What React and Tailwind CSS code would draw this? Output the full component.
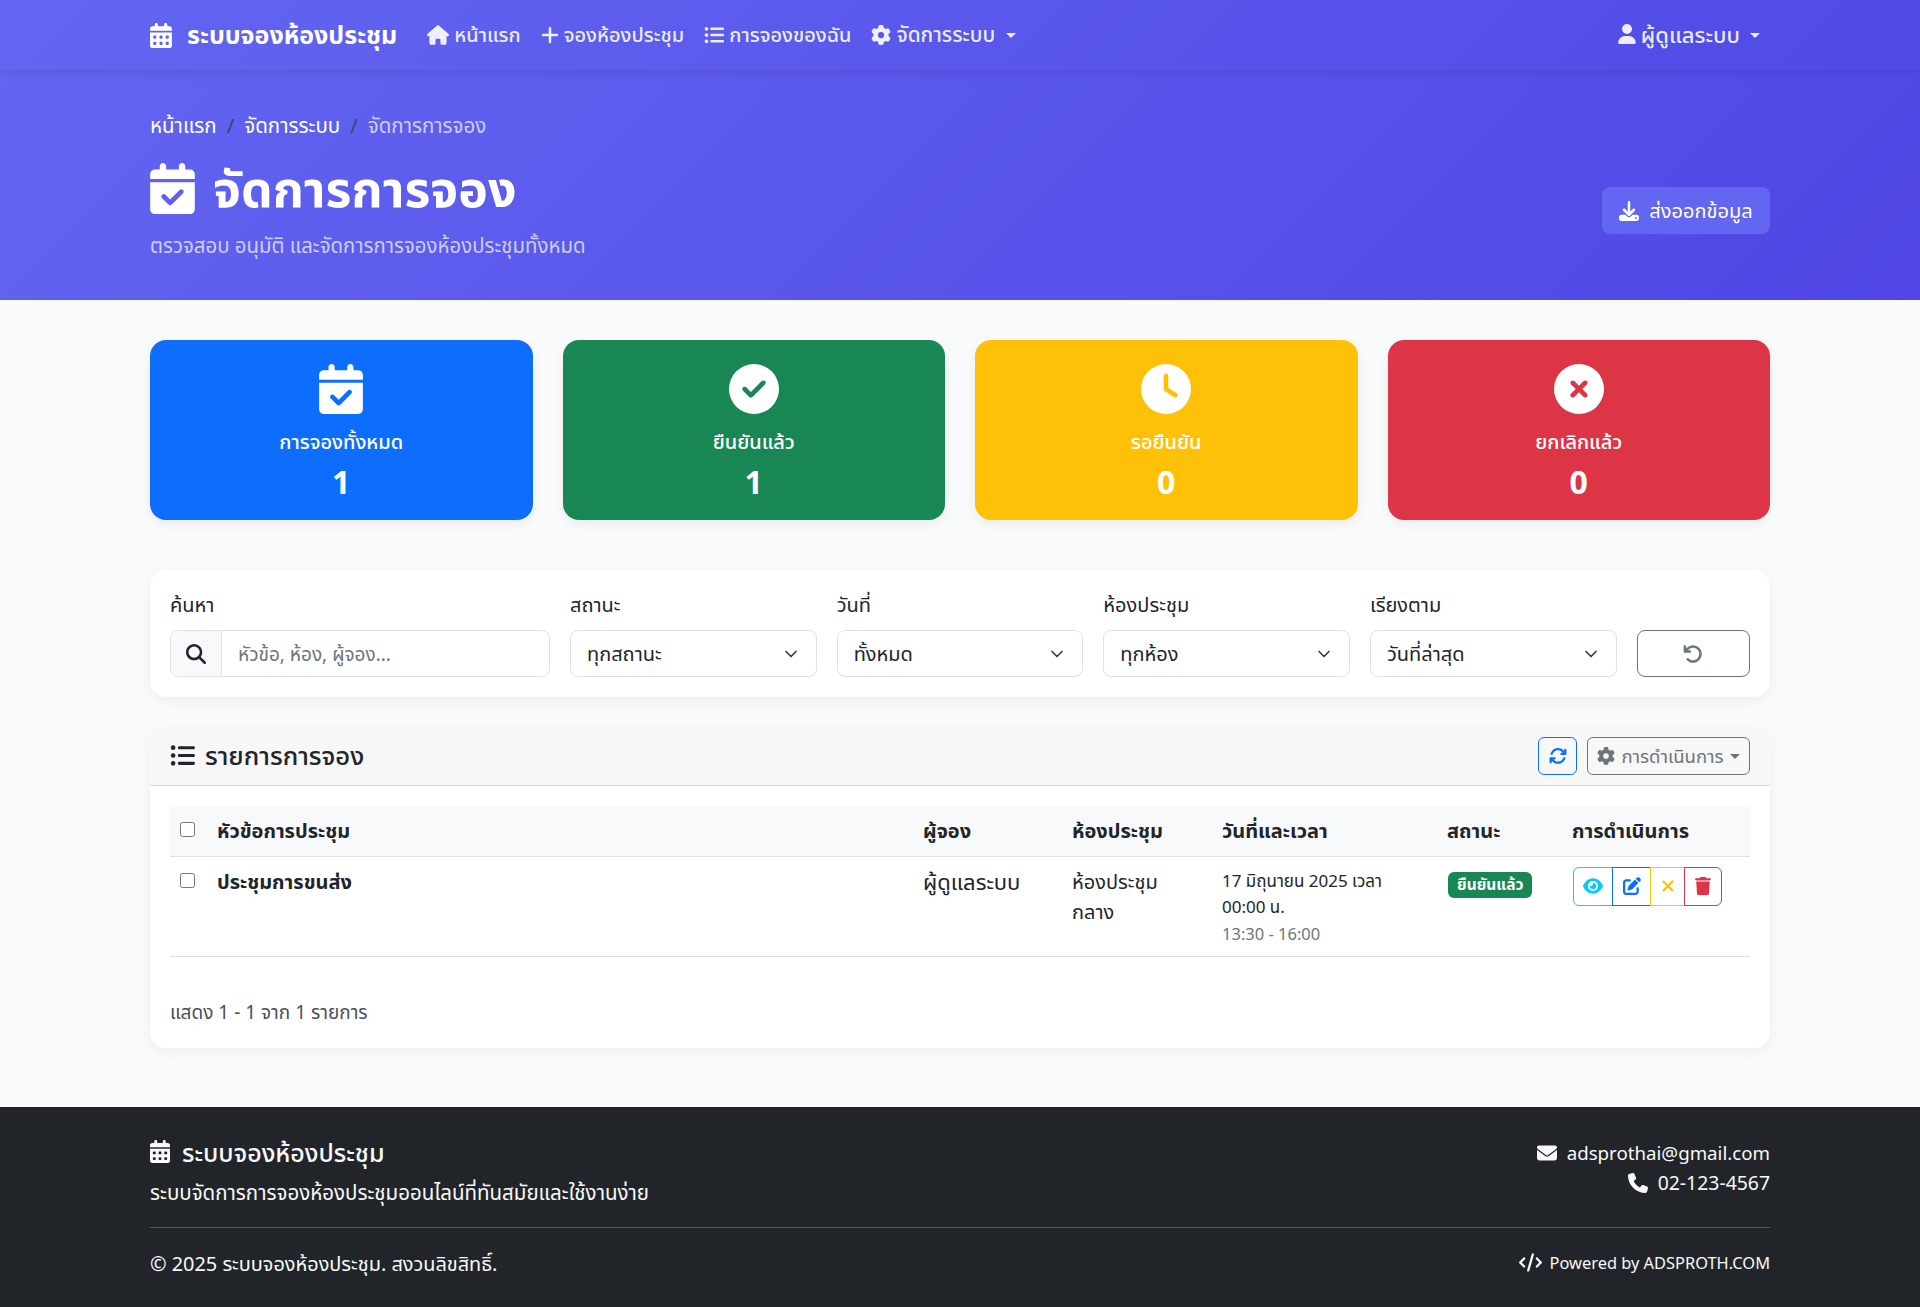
import React from 'react';
import {
  FaCalendarDays, FaHouse, FaPlus, FaListUl, FaGear, FaUser, FaCalendarCheck, FaDownload,
  FaCircleCheck, FaClock, FaCircleXmark, FaMagnifyingGlass, FaArrowRotateLeft, FaArrowsRotate,
  FaEye, FaPenToSquare, FaXmark, FaTrash, FaEnvelope, FaPhone, FaCode,
} from 'react-icons/fa6';
import { ChevronDown } from 'lucide-react';

const STATS = [
  { label: 'การจองทั้งหมด', value: '1', icon: FaCalendarCheck, bg: 'bg-[#0d6efd]' },
  { label: 'ยืนยันแล้ว', value: '1', icon: FaCircleCheck, bg: 'bg-[#198754]' },
  { label: 'รอยืนยัน', value: '0', icon: FaClock, bg: 'bg-[#ffc107]' },
  { label: 'ยกเลิกแล้ว', value: '0', icon: FaCircleXmark, bg: 'bg-[#dc3545]' },
];

const FILTERS = [
  { label: 'สถานะ', value: 'ทุกสถานะ' },
  { label: 'วันที่', value: 'ทั้งหมด' },
  { label: 'ห้องประชุม', value: 'ทุกห้อง' },
  { label: 'เรียงตาม', value: 'วันที่ล่าสุด' },
];

function Caret({ className }) {
  return <span className={`inline-block w-0 h-0 border-x-[5px] border-x-transparent border-t-[5px] ${className}`} />;
}

function NavLink({ icon: Icon, iconClass, textClass = 'text-[20px]', children }) {
  return (
    <a className={`flex items-center gap-[5px] text-[#ffffffe6] font-medium ${textClass}`}>
      <Icon className={iconClass} />
      <span>{children}</span>
    </a>
  );
}

function Navbar() {
  return (
    <nav className="h-[70px] shadow-[0_2px_10px_rgba(0,0,0,0.1)] relative">
      <div className="w-[1620px] mx-auto h-full flex items-center">
        <a className="flex items-center gap-[15px] text-white text-[25px] font-bold mr-[30px]">
          <FaCalendarDays className="w-[22px] h-[25px]" />
          <span>ระบบจองห้องประชุม</span>
        </a>
        <div className="flex items-center gap-5">
          <NavLink icon={FaHouse} iconClass="w-[22px] h-5">หน้าแรก</NavLink>
          <NavLink icon={FaPlus} iconClass="w-[18px] h-5">จองห้องประชุม</NavLink>
          <NavLink icon={FaListUl} iconClass="w-5 h-5">การจองของฉัน</NavLink>
          <div className="flex items-center gap-[11px]">
            <NavLink icon={FaGear} iconClass="w-5 h-5" textClass="text-[20.8px]">จัดการระบบ</NavLink>
            <Caret className="border-t-[#ffffffe6]" />
          </div>
        </div>
        <div className="ml-auto mr-[10px] flex items-center gap-[10px]">
          <NavLink icon={FaUser} iconClass="w-[18px] h-5" textClass="text-[22px] leading-[26px] mb-[2px]">ผู้ดูแลระบบ</NavLink>
          <Caret className="border-t-[#ffffffe6]" />
        </div>
      </div>
    </nav>
  );
}

function Hero() {
  return (
    <div className="w-[1620px] mx-auto h-[230px] pt-[42px]">
      <div className="flex items-center gap-[10px] text-[20.5px] leading-[26px]">
        <span className="text-white">หน้าแรก</span>
        <span className="text-[#3d4270]">/</span>
        <span className="text-white">จัดการระบบ</span>
        <span className="text-[#3d4270]">/</span>
        <span className="text-[#ffffffb3]">จัดการการจอง</span>
      </div>
      <div className="flex items-center justify-between mt-4">
        <div>
          <h1 className="flex items-center gap-[18px] text-white text-[50px] font-bold leading-[68px]">
            <FaCalendarCheck className="w-[45px] h-[51px]" />
            จัดการการจอง
          </h1>
          <p className="text-[#ffffffb3] text-[20.4px] leading-[29px] mt-[9px]">ตรวจสอบ อนุมัติ และจัดการการจองห้องประชุมทั้งหมด</p>
        </div>
        <button className="w-[168px] h-[47px] mt-[7px] rounded-lg bg-[#6366f1] text-white text-[20px] flex items-center justify-center gap-[10px]">
          <FaDownload className="w-5 h-5" />
          ส่งออกข้อมูล
        </button>
      </div>
    </div>
  );
}

function StatCard({ stat }) {
  const Icon = stat.icon;
  return (
    <div className={`${stat.bg} h-[180px] rounded-2xl pt-6 flex flex-col items-center text-white shadow-[0_4px_12px_rgba(0,0,0,0.06)]`}>
      <Icon className="w-[50px] h-[50px]" />
      <div className="text-[20px] font-medium leading-[29px] mt-[13px]">{stat.label}</div>
      <div className="text-[32px] font-bold leading-[38px] mt-[7px]">{stat.value}</div>
    </div>
  );
}

function Filters() {
  return (
    <div className="bg-white rounded-2xl p-5 mt-[50px] shadow-[0_4px_14px_rgba(0,0,0,0.05)] grid grid-cols-12 gap-5 items-end">
      <div className="col-span-3">
        <label className="block text-[20px] leading-[30px] text-[#212529] mb-[10px]">ค้นหา</label>
        <div className="flex h-[47px] border border-[#dee2e6] rounded-lg overflow-hidden">
          <span className="w-[51px] bg-[#f8f9fa] border-r border-[#dee2e6] flex items-center justify-center text-[#212529]">
            <FaMagnifyingGlass className="w-5 h-5" />
          </span>
          <input placeholder="หัวข้อ, ห้อง, ผู้จอง..." className="flex-1 min-w-0 px-4 pt-px text-[19px] outline-none placeholder:text-[#6c757d]" />
        </div>
      </div>
      {FILTERS.map(f => (
        <div key={f.label} className="col-span-2">
          <label className="block text-[20px] leading-[30px] text-[#212529] mb-[10px]">{f.label}</label>
          <div className="h-[47px] border border-[#dee2e6] rounded-lg pl-4 pr-[15px] flex items-center justify-between text-[20px] text-[#212529]">
            <span>{f.value}</span>
            <ChevronDown className="w-5 h-5 text-[#343a40]" strokeWidth={2} />
          </div>
        </div>
      ))}
      <button className="col-span-1 h-[47px] border border-[#6c757d] rounded-lg flex items-center justify-center text-[#6c757d]">
        <FaArrowRotateLeft className="w-5 h-5" />
      </button>
    </div>
  );
}

function BookingTable() {
  return (
    <table className="w-full table-fixed text-[20px] text-[#212529]">
      <colgroup>
        <col className="w-[39px]" />
        <col className="w-[706px]" />
        <col className="w-[149px]" />
        <col className="w-[150px]" />
        <col className="w-[225px]" />
        <col className="w-[125px]" />
        <col className="w-[186px]" />
      </colgroup>
      <thead>
        <tr className="h-[50px] bg-[#f8f9fa] border-b border-[#dee2e6] text-left">
          <th className="pl-2 align-middle"><input type="checkbox" className="w-[15px] h-[15px] block ml-[2px] mb-[2px]" /></th>
          <th className="px-2 font-bold">หัวข้อการประชุม</th>
          <th className="px-2 font-bold">ผู้จอง</th>
          <th className="px-2 font-bold">ห้องประชุม</th>
          <th className="px-2 font-bold">วันที่และเวลา</th>
          <th className="px-2 font-bold">สถานะ</th>
          <th className="px-2 font-bold">การดำเนินการ</th>
        </tr>
      </thead>
      <tbody>
        <tr className="h-[100px] border-b border-[#dee2e6] align-top">
          <td className="pl-2 pt-4"><input type="checkbox" className="w-[15px] h-[15px] block ml-[2px]" /></td>
          <td className="px-2 pt-[10px] font-bold leading-[30px]">ประชุมการขนส่ง</td>
          <td className="px-2 pt-[9px] text-[22px] leading-[30px]">ผู้ดูแลระบบ</td>
          <td className="px-2 pt-[10px] leading-[30px]">ห้องประชุม<br />กลาง</td>
          <td className="px-2 pt-[11px] text-[17px] leading-[26px]">
            17 มิถุนายน 2025 เวลา<br />00:00 น.
            <div className="text-[16.5px] leading-[27px] text-[#6c757d]">13:30 - 16:00</div>
          </td>
          <td className="px-2 pt-[15px]">
            <span className="flex items-center w-fit h-[26px] px-[9px] ml-px rounded-md bg-[#198754] text-white text-[15.5px] font-bold">ยืนยันแล้ว</span>
          </td>
          <td className="pl-2 pt-[10px]">
            <div className="flex h-[39px] w-[149px] ml-px">
              <button className="w-[40px] border border-[#0dcaf0] rounded-l-md flex items-center justify-center text-[#0dcaf0]"><FaEye className="w-5 h-5" /></button>
              <button className="w-[39px] -ml-px border border-[#0d6efd] flex items-center justify-center text-[#0d6efd]"><FaPenToSquare className="w-[18px] h-[18px]" /></button>
              <button className="w-[35px] -ml-px border border-[#ffc107] flex items-center justify-center text-[#ffc107]"><FaXmark className="w-[18px] h-[18px]" /></button>
              <button className="w-[38px] -ml-px border border-[#dc3545] rounded-r-md flex items-center justify-center text-[#dc3545]"><FaTrash className="w-4 h-[18px]" /></button>
            </div>
          </td>
        </tr>
      </tbody>
    </table>
  );
}

function BookingList() {
  return (
    <div className="bg-white rounded-2xl mt-[30px] shadow-[0_4px_14px_rgba(0,0,0,0.05)] overflow-hidden">
      <div className="h-[59px] bg-[#f7f7f7] border-b border-[#d3d4d5] px-5 flex items-center justify-between">
        <h2 className="flex items-center gap-[10px] text-[25.6px] font-medium text-[#212529]">
          <FaListUl className="w-[25px] h-[25px]" />
          รายการการจอง
        </h2>
        <div className="flex items-center gap-[10px]">
          <button className="w-[39px] h-[38px] border border-[#0d6efd] rounded-md flex items-center justify-center text-[#0d6efd]">
            <FaArrowsRotate className="w-[18px] h-[18px]" />
          </button>
          <button className="w-[163px] h-[38px] border border-[#6c757d] rounded-md flex items-center justify-center gap-[6px] text-[#6c757d] text-[18.5px]">
            <FaGear className="w-[18px] h-[18px]" />
            การดำเนินการ
            <Caret className="border-t-[#6c757d]" />
          </button>
        </div>
      </div>
      <div className="px-5 pt-5 pb-[23px]">
        <BookingTable />
        <p className="mt-[42px] text-[19px] leading-[26px] text-[#495057]">แสดง 1 - 1 จาก 1 รายการ</p>
      </div>
    </div>
  );
}

function Footer() {
  return (
    <footer className="bg-[#212529] h-[200px] mt-[59px] text-[#f8f9fa]">
      <div className="w-[1620px] mx-auto pt-[26px]">
        <div className="flex justify-between">
          <div>
            <div className="flex items-center gap-3 text-[25px] font-medium leading-[38px]">
              <FaCalendarDays className="w-5 h-[23px]" />
              ระบบจองห้องประชุม
            </div>
            <p className="text-[20.5px] leading-[29px] mt-[7px]">ระบบจัดการการจองห้องประชุมออนไลน์ที่ทันสมัยและใช้งานง่าย</p>
          </div>
          <div className="text-[18.7px] leading-[30px] text-right pt-[5px]">
            <div className="flex items-center justify-end gap-[10px]"><FaEnvelope className="w-5 h-5" />adsprothai@gmail.com</div>
            <div className="flex items-center justify-end gap-[10px] text-[19.4px]"><FaPhone className="w-5 h-5" />02-123-4567</div>
          </div>
        </div>
        <div className="border-t border-[#55595c] mt-5 pt-[21px] flex justify-between items-center">
          <span className="text-[19.9px] leading-[29px]">© 2025 ระบบจองห้องประชุม. สงวนลิขสิทธิ์.</span>
          <span className="flex items-center gap-[8px] text-[16.4px]"><FaCode className="w-[23px] h-[23px]" />Powered by ADSPROTH.COM</span>
        </div>
      </div>
    </footer>
  );
}

export default function App() {
  return (
    <div className="min-h-[1307px] bg-[#f8fafc] font-['Noto_Sans','Noto_Sans_Thai',sans-serif]">
      <header className="bg-[linear-gradient(135deg,#6366f1,#4f46e5)]">
        <Navbar />
        <Hero />
      </header>
      <main className="w-[1620px] mx-auto pt-10">
        <div className="grid grid-cols-4 gap-[30px]">
          {STATS.map(s => <StatCard key={s.label} stat={s} />)}
        </div>
        <Filters />
        <BookingList />
      </main>
      <Footer />
    </div>
  );
}
